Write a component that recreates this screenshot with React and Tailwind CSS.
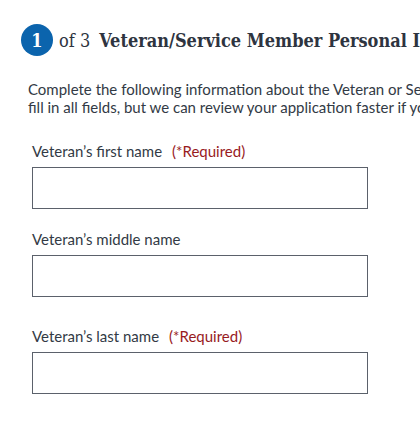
import React from "react";

const sans = "font-['Lato','Noto_Sans',sans-serif]";
const serif = "font-['DejaVu_Serif_Condensed','DejaVu_Serif','Liberation_Serif',serif] font-stretch-condensed";

function Field({ label, required, className }) {
  return (
    <div className={className}>
      <label className={`block ${sans} text-[15px] leading-[20px] text-[#323a45]`}>
        {label}
        {required && <span className="ml-[10px] text-[#981b1e]">(*Required)</span>}
      </label>
      <input
        type="text"
        className="mt-[6px] block w-[336px] h-[42px] border border-[#5b616b] bg-white px-2 outline-none"
      />
    </div>
  );
}

export default function App() {
  return (
    <div className="w-[420px] h-[421px] overflow-hidden bg-white">
      <div className="flex items-center pl-[21px] pt-6">
        <div className={`flex h-8 w-8 shrink-0 items-center justify-center rounded-full bg-[#0b64ad] text-white ${serif} text-[18px] font-bold`}>
          1
        </div>
        <span className={`ml-[6px] ${serif} text-[18px] text-[#2e3440] whitespace-nowrap`}>of 3</span>
        <h2 className={`ml-[9px] ${serif} text-[18px] font-bold text-[#2e3440] whitespace-nowrap`}>
          Veteran/Service Member Personal Information
        </h2>
      </div>

      <p className={`mt-6 pl-[28px] ${sans} text-[15px] leading-[18px] text-[#323a45] whitespace-nowrap`}>
        Complete the following information about the Veteran or Service Member. You don’t have to
        <br />
        fill in all fields, but we can review your application faster if you provide more information.
      </p>

      <div className="pl-[32px]">
        <Field className="mt-[25px]" label="Veteran’s first name" required />
        <Field className="mt-[20px]" label="Veteran’s middle name" />
        <Field className="mt-[29px]" label="Veteran’s last name" required />
      </div>
    </div>
  );
}
